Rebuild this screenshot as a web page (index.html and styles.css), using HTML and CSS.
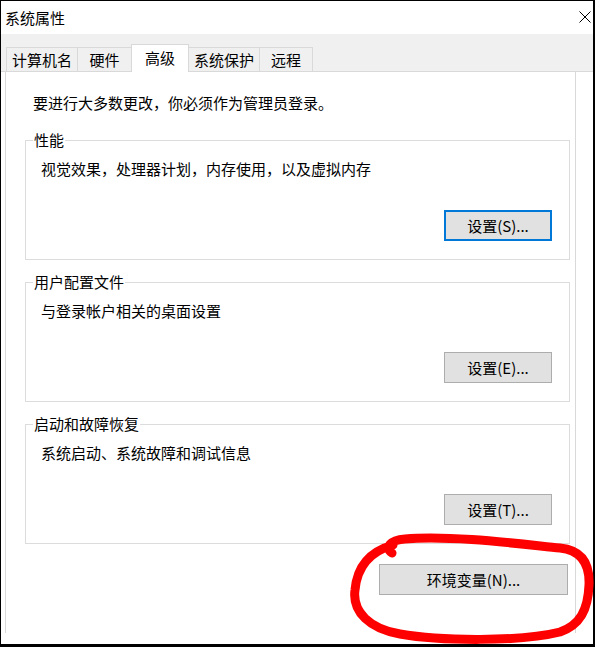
FILE: index.html
```html
<!DOCTYPE html>
<html lang="zh-CN">
<head>
    <meta charset="UTF-8">
    <meta name="viewport" content="width=device-width, initial-scale=1.0">
    <title>系统属性</title>
    <link rel="stylesheet" href="styles.css">
</head>
<body>
    <div class="window">
        <div class="titlebar">
            <span class="title">系统属性</span>
            <svg class="close" width="12" height="12" viewBox="0 0 12 12">
                <path d="M0.5 0.5 L11.5 11.5 M11.5 0.5 L0.5 11.5" stroke="#000" stroke-width="1" fill="none"/>
            </svg>
        </div>
        <div class="tabstrip">
            <div class="tab">计算机名</div>
            <div class="tab">硬件</div>
            <div class="tab active">高级</div>
            <div class="tab">系统保护</div>
            <div class="tab">远程</div>
        </div>
        <div class="panel">
            <p class="intro">要进行大多数更改，你必须作为管理员登录。</p>

            <fieldset class="group">
                <legend>性能</legend>
                <p class="desc">视觉效果，处理器计划，内存使用，以及虚拟内存</p>
                <div class="actions">
                    <button class="btn focused">设置(S)...</button>
                </div>
            </fieldset>

            <fieldset class="group">
                <legend>用户配置文件</legend>
                <p class="desc">与登录帐户相关的桌面设置</p>
                <div class="actions">
                    <button class="btn">设置(E)...</button>
                </div>
            </fieldset>

            <fieldset class="group">
                <legend>启动和故障恢复</legend>
                <p class="desc">系统启动、系统故障和调试信息</p>
                <div class="actions">
                    <button class="btn">设置(T)...</button>
                </div>
            </fieldset>

            <div class="env-row">
                <button class="btn wide">环境变量(N)...</button>
            </div>
        </div>
    </div>

    <!-- red marker drawn over the screenshot -->
    <svg class="marker" width="595" height="647" viewBox="0 0 595 647">
        <path d="M392 553 C384 548, 390 540, 405 539 C450 535, 520 544, 560 548 C580 550, 590 562, 589 585 C588 610, 580 625, 560 632 C520 642, 440 641, 400 634 C370 629, 352 612, 355 590 C357 568, 368 552, 393 545"
              stroke="#ff0000" stroke-width="9" fill="none" stroke-linecap="round" stroke-linejoin="round"/>
    </svg>
</body>
</html>
```

FILE: styles.css
```css
html, body {
    margin: 0;
    padding: 0;
    background-color: #ffffff;
    font-family: 'Noto Sans CJK SC', 'Microsoft YaHei', sans-serif;
    font-size: 15px;
    color: #000000;
}
.window {
    width: 595px;
    height: 647px;
    box-sizing: border-box;
    border-top: 1px solid #000;
    border-left: 1px solid #000;
    border-right: 2px solid #000;
    border-bottom: 3px solid #000;
    background-color: #ffffff;
    display: flex;
    flex-direction: column;
}
.titlebar {
    height: 33px;
    display: flex;
    align-items: center;
    justify-content: space-between;
    padding: 0 2px 0 4px;
}
.title {
    line-height: 20px;
}
.close {
    margin-bottom: 2px;
}
.tabstrip {
    height: 37px;
    background-color: #f0f0f0;
    border-bottom: 1px solid #d9d9d9;
    display: flex;
    align-items: flex-end;
    padding-left: 5px;
}
.tab {
    box-sizing: border-box;
    height: 24px;
    min-width: 54px;
    padding: 0 5px;
    margin-left: -1px;
    border: 1px solid #d9d9d9;
    border-bottom: none;
    background-color: #f0f0f0;
    text-align: center;
    line-height: 24px;
}
.tab:first-child {
    margin-left: 0;
}
.tab:nth-child(2) {
    min-width: 55px;
}
.tab.active {
    position: relative;
    height: 28px;
    width: 58px;
    margin-bottom: -1px;
    padding: 0;
    background-color: #ffffff;
    line-height: 25px;
    z-index: 1;
}
.panel {
    flex: 1;
    width: 571px;
    box-sizing: border-box;
    margin: 0 0 11px 4px;
    padding: 21px 5px 0 19px;
    border-left: 1px solid #d9d9d9;
    border-right: 1px solid #d9d9d9;
}
.intro {
    margin: 0 0 17px 8px;
    line-height: 20px;
}
.group {
    margin: 0 0 12px 0;
    padding: 0 17px 18px 7px;
    border: 1px solid #dcdcdc;
}
.group legend {
    padding: 0 1px;
    line-height: 20px;
}
.desc {
    margin: 9px 0 0 8px;
    line-height: 20px;
}
.actions {
    display: flex;
    justify-content: flex-end;
    margin-top: 31px;
}
.btn {
    box-sizing: border-box;
    width: 108px;
    height: 31px;
    padding: 0;
    border: 1px solid #adadad;
    background-color: #e1e1e1;
    font-family: inherit;
    font-size: 15px;
    color: #000;
}
.btn.focused {
    border: 2px solid #0078d7;
}
.env-row {
    display: flex;
    justify-content: flex-end;
    margin-top: 20px;
    padding-right: 2px;
}
.btn.wide {
    width: 189px;
}
.marker {
    position: absolute;
    top: 0;
    left: 0;
    pointer-events: none;
}
```
